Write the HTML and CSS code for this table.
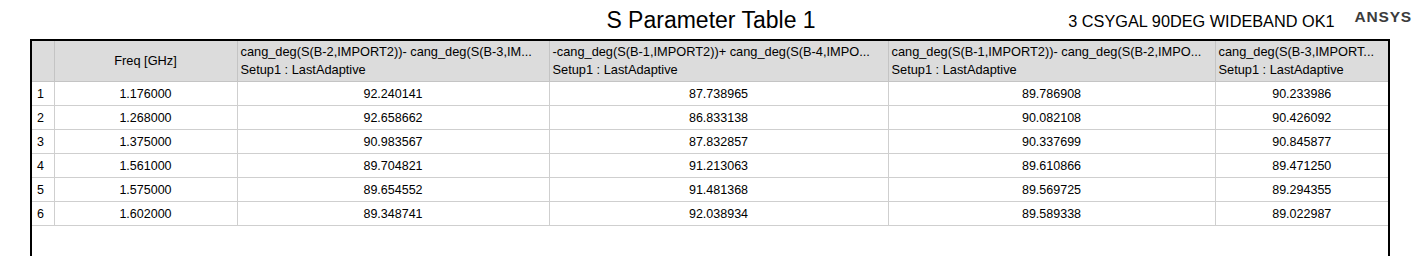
FILE: index.html
```html
<!DOCTYPE html>
<html lang="en">
<head>
  <meta charset="UTF-8">
  <title>S Parameter Table 1</title>
  <link rel="stylesheet" href="styles.css">
</head>
<body>
  <div class="top">
    <span></span>
    <h1 class="title">S Parameter Table 1</h1>
    <div class="meta">
      <span class="design">3 CSYGAL 90DEG WIDEBAND OK1</span>
      <span class="brand">ANSYS</span>
    </div>
  </div>

  <div class="frame">
    <table class="grid">
      <colgroup>
        <col class="c-idx">
        <col class="c-freq">
        <col class="c-a">
        <col class="c-b">
        <col class="c-c">
        <col class="c-d">
      </colgroup>
      <thead>
        <tr>
          <th></th>
          <th class="center">Freq [GHz]</th>
          <th>cang_deg(S(B-2,IMPORT2))- cang_deg(S(B-3,IM...<br>Setup1 : LastAdaptive</th>
          <th>-cang_deg(S(B-1,IMPORT2))+ cang_deg(S(B-4,IMPO...<br>Setup1 : LastAdaptive</th>
          <th>cang_deg(S(B-1,IMPORT2))- cang_deg(S(B-2,IMPO...<br>Setup1 : LastAdaptive</th>
          <th>cang_deg(S(B-3,IMPORT...<br>Setup1 : LastAdaptive</th>
        </tr>
      </thead>
      <tbody>
        <tr><td class="idx">1</td><td>1.176000</td><td>92.240141</td><td>87.738965</td><td>89.786908</td><td>90.233986</td></tr>
        <tr><td class="idx">2</td><td>1.268000</td><td>92.658662</td><td>86.833138</td><td>90.082108</td><td>90.426092</td></tr>
        <tr><td class="idx">3</td><td>1.375000</td><td>90.983567</td><td>87.832857</td><td>90.337699</td><td>90.845877</td></tr>
        <tr><td class="idx">4</td><td>1.561000</td><td>89.704821</td><td>91.213063</td><td>89.610866</td><td>89.471250</td></tr>
        <tr><td class="idx">5</td><td>1.575000</td><td>89.654552</td><td>91.481368</td><td>89.569725</td><td>89.294355</td></tr>
        <tr><td class="idx">6</td><td>1.602000</td><td>89.348741</td><td>92.038934</td><td>89.589338</td><td>89.022987</td></tr>
      </tbody>
    </table>
  </div>
</body>
</html>
```

FILE: styles.css
```css
html, body {
  margin: 0;
  padding: 0;
  background: #fff;
  overflow: hidden;
}
body {
  font-family: "Liberation Sans", Arial, sans-serif;
  color: #000;
}

div.top {
  display: grid;
  grid-template-columns: 1fr auto 1fr;
  align-items: center;
  height: 39px;
}
div.top .title {
  margin: 0;
  font-size: 23px;
  font-weight: normal;
  padding-top: 1px;
}
div.top .meta {
  justify-self: end;
  display: flex;
  align-items: center;
  gap: 20px;
  padding-right: 10px;
}
div.top .design {
  font-size: 16.3px;
  padding-top: 3px;
}
div.top .brand {
  font-size: 15.5px;
  font-weight: bold;
  letter-spacing: 0.8px;
  color: #3c3c3c;
  margin-top: -6px;
}

/* frame runs off the bottom of the view, like the original window */
div.frame {
  margin-left: 30px;
  width: 1356px;
  height: 215px;
  border: 2px solid #000;
  border-bottom: none;
}

table.grid {
  border-collapse: collapse;
  table-layout: fixed;
  width: 1356px;
  font-size: 12.5px;
}
table.grid col.c-idx { width: 22px; }
table.grid col.c-freq { width: 183px; }
table.grid col.c-a { width: 312px; }
table.grid col.c-b { width: 339px; }
table.grid col.c-c { width: 327px; }
table.grid col.c-d { width: 173px; }

table.grid th {
  background: #dcdcdc;
  font-size: 12.8px;
  font-weight: normal;
  text-align: left;
  height: 40px;
  padding: 0 3px;
  line-height: 18px;
  white-space: nowrap;
  overflow: hidden;
  border-right: 1px solid #c4c4c4;
  border-bottom: 1px solid #c4c4c4;
  vertical-align: middle;
}
table.grid th.center {
  text-align: center;
}
table.grid td {
  height: 23px;
  padding: 0 3px;
  text-align: center;
  border-right: 1px solid #cfcfcf;
  border-bottom: 1px solid #cfcfcf;
}
table.grid td.idx {
  text-align: left;
  padding-left: 5px;
}
table.grid tr > :last-child {
  border-right: none;
}
```
